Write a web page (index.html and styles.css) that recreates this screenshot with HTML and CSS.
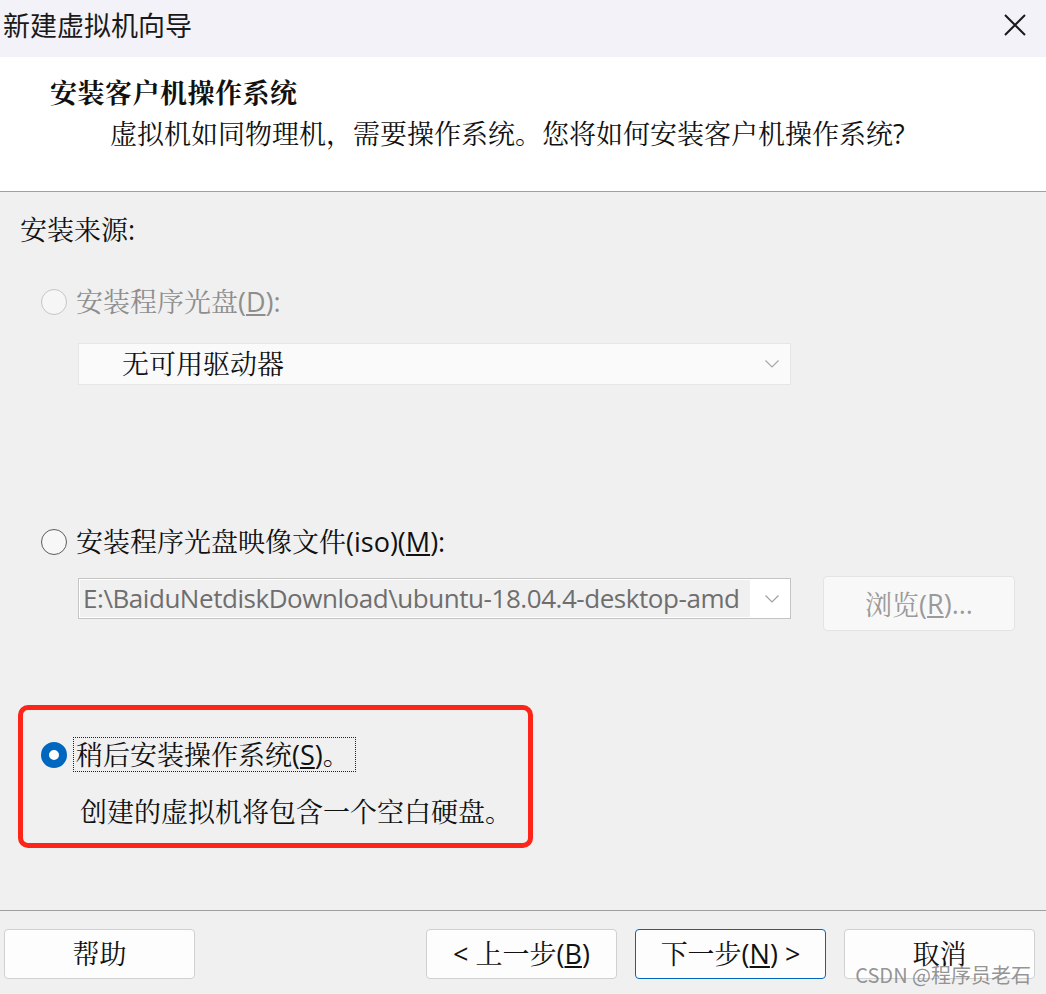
FILE: index.html
```html
<!DOCTYPE html>
<html lang="zh-CN">
<head>
<meta charset="utf-8">
<title>新建虚拟机向导</title>
<link rel="stylesheet" href="styles.css">
</head>
<body>
<div class="window">
  <div class="titlebar">
    <span class="title">新建虚拟机向导</span>
    <svg class="close" width="22" height="22" viewBox="0 0 22 22"><path d="M1 1 L21 21 M21 1 L1 21" stroke="#1a1a1a" stroke-width="2" fill="none"/></svg>
  </div>
  <div class="header">
    <div class="h-title">安装客户机操作系统</div>
    <div class="h-sub">虚拟机如同物理机，需要操作系统。您将如何安装客户机操作系统?</div>
  </div>
  <div class="content">
    <div class="group-label">安装来源:</div>
    <div class="option option-disabled">
      <span class="radio radio-disabled"></span>
      <span class="opt-text">安装程序光盘(<u>D</u>):</span>
    </div>
    <div class="select select-disabled">
      <span class="select-text">无可用驱动器</span>
      <svg class="chevron" width="14" height="8" viewBox="0 0 14 8"><path d="M0.5 0.5 L7 7 L13.5 0.5" stroke="#a8a8a8" stroke-width="1.2" fill="none"/></svg>
    </div>
    <div class="option option-iso">
      <span class="radio"></span>
      <span class="opt-text">安装程序光盘映像文件(iso)(<u>M</u>):</span>
    </div>
    <div class="iso-row">
      <div class="select select-iso">
        <span class="select-value">E:\BaiduNetdiskDownload\ubuntu-18.04.4-desktop-amd</span>
        <svg class="chevron" width="14" height="8" viewBox="0 0 14 8"><path d="M0.5 0.5 L7 7 L13.5 0.5" stroke="#a0a0a0" stroke-width="1.2" fill="none"/></svg>
      </div>
      <div class="browse">浏览(<u>R</u>)...</div>
    </div>
    <div class="highlight">
      <div class="option option-later">
        <span class="radio radio-checked"></span>
        <span class="focus-label">稍后安装操作系统(<u>S</u>)。</span>
      </div>
      <div class="desc">创建的虚拟机将包含一个空白硬盘。</div>
    </div>
  </div>
  <div class="footer">
    <button class="btn btn-help">帮助</button>
    <div class="nav">
      <button class="btn">&lt; 上一步(<u>B</u>)</button>
      <button class="btn btn-primary">下一步(<u>N</u>) &gt;</button>
      <button class="btn">取消</button>
    </div>
    <div class="watermark">CSDN @程序员老石</div>
  </div>
</div>
</body>
</html>
```

FILE: styles.css
```css
html, body {
  margin: 0;
  padding: 0;
}
body {
  width: 1046px;
  height: 994px;
  overflow: hidden;
  background: #f0f0f0;
  font-family: "Open Sans", "Noto Serif CJK SC", "Noto Sans CJK SC", sans-serif;
  font-size: 27px;
  color: #111;
}
.window {
  width: 1046px;
  height: 994px;
  display: flex;
  flex-direction: column;
}
.titlebar {
  height: 57px;
  background: #f3f2f8;
  display: flex;
  align-items: flex-start;
  justify-content: space-between;
  padding: 8px 20px 0 3px;
  box-sizing: border-box;
}
.title {
  font-family: "Noto Sans CJK SC", sans-serif;
  font-size: 27px;
  line-height: 34px;
  color: #1a1a1a;
}
.close {
  margin-top: 6px;
}
.header {
  height: 135px;
  background: #fff;
  border-bottom: 1px solid #a0a0a0;
  box-sizing: border-box;
  padding-top: 19px;
}
.h-title {
  padding-left: 50px;
  line-height: 34px;
  font-weight: 700;
  letter-spacing: 0.5px;
}
.h-sub {
  padding-left: 110px;
  margin-top: 7px;
  line-height: 34px;
}
.content {
  height: 718px;
  display: flex;
  flex-direction: column;
  align-items: flex-start;
}
.group-label {
  margin-top: 21px;
  padding-left: 20px;
  line-height: 34px;
}
.option {
  display: flex;
  align-items: center;
  height: 34px;
  line-height: 34px;
  padding-left: 41px;
}
.option-disabled {
  margin-top: 38px;
  color: #8e8e8e;
}
.option-iso {
  margin-top: 140px;
}
.radio {
  width: 26px;
  height: 26px;
  box-sizing: border-box;
  border-radius: 50%;
  border: 1.5px solid #5c5c5c;
  background: #f7f7f7;
  margin-right: 9px;
  flex: none;
}
.radio-disabled {
  border-color: #c6c6c6;
  background: #f6f6f6;
}
.radio-checked {
  border: 8px solid #0067c0;
  background: #fff;
  margin-right: 6px;
}
.select {
  width: 713px;
  height: 42px;
  box-sizing: border-box;
  margin-left: 78px;
  display: flex;
  align-items: center;
}
.select-disabled {
  margin-top: 24px;
  background: #fafafa;
  border: 1px solid #e6e6e6;
}
.select-text {
  padding-left: 43px;
  line-height: 34px;
  color: #111;
}
.chevron {
  margin-left: auto;
  margin-right: 11px;
}
.iso-row {
  margin-top: 17px;
  display: flex;
  align-items: flex-start;
}
.select-iso {
  margin-top: 2px;
  height: 41px;
  background: #fff;
  border: 1px solid #c4c4c4;
  padding: 1px;
}
.select-value {
  width: 670px;
  height: 37px;
  background: #f0f0f0;
  color: #6e6e6e;
  line-height: 37px;
  padding-left: 3px;
  box-sizing: border-box;
  white-space: nowrap;
  font-size: 26px;
  letter-spacing: -0.45px;
}
.select-iso .chevron {
  margin-right: 10px;
}
.browse {
  margin-left: 32px;
  width: 192px;
  height: 55px;
  box-sizing: border-box;
  background: #f8f8f8;
  border: 1px solid #e4e4e4;
  border-radius: 4px;
  color: #9a9a9a;
  display: flex;
  align-items: center;
  justify-content: center;
}
.highlight {
  margin-top: 74px;
  margin-left: 18px;
  width: 515px;
  height: 143px;
  box-sizing: border-box;
  border: 5px solid #ff2418;
  border-radius: 10px;
  padding-top: 27px;
}
.option-later {
  padding-left: 18px;
  height: 35px;
}
.focus-label {
  border: 1px dotted #222;
  padding: 0 5px 0 2px;
  height: 33px;
  line-height: 33px;
  color: #111;
}
.desc {
  margin-top: 23px;
  padding-left: 57px;
  line-height: 34px;
}
.footer {
  flex: 1;
  border-top: 1px solid #a0a0a0;
  display: flex;
  align-items: flex-start;
  padding: 18px 11px 0 4px;
  position: relative;
}
.btn {
  width: 191px;
  height: 50px;
  box-sizing: border-box;
  background: #fdfdfd;
  border: 1px solid #d0d0d0;
  border-radius: 4px;
  font-family: inherit;
  font-size: 27px;
  color: #111;
  padding: 0;
  line-height: 46px;
}
.btn-primary {
  border-color: #0067c0;
}
.nav {
  margin-left: auto;
  display: flex;
  gap: 18px;
}
.watermark {
  position: absolute;
  right: 15px;
  bottom: 7px;
  font-family: "Noto Sans CJK SC", sans-serif;
  font-size: 20px;
  line-height: 24px;
  color: rgba(130, 130, 130, 0.85);
}
```
